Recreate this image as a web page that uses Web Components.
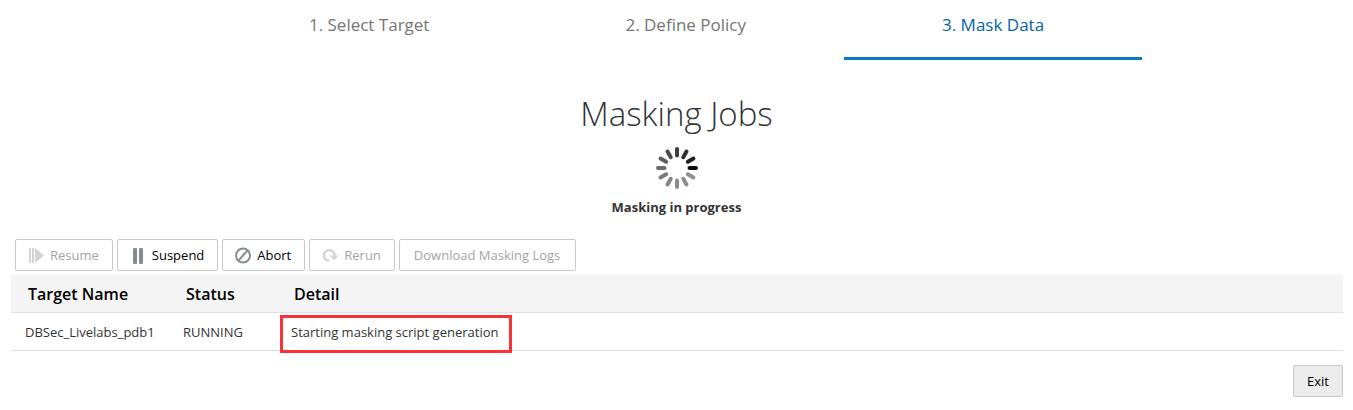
<!DOCTYPE html>
<html lang="en">
<head>
<meta charset="utf-8">
<title>Masking Jobs</title>
<style>
  body { margin: 0; background: #fff; color: #333; font: 13px/20px "Open Sans", "Noto Sans", sans-serif; }
</style>
</head>
<body>
<masking-page></masking-page>
<script>
const define = (name, html, setup) => {
  const tpl = document.createElement('template');
  tpl.innerHTML = html;
  customElements.define(name, class extends HTMLElement {
    constructor() {
      super();
      this.attachShadow({ mode: 'open' }).append(tpl.content.cloneNode(true));
    }
    connectedCallback() { if (setup) setup(this, this.shadowRoot); }
  });
};

const ICONS = {
  resume: '<path d="M1 1h2v15H1zM4 1h2v15H4zM7 1l9 7.500-9 7.500z"/>',
  suspend: '<rect x="3" y="1" width="4" height="16" rx="1"/><rect x="9" y="1" width="4" height="16" rx="1"/>',
  abort: '<g fill="none" stroke="currentColor" stroke-width="2"><circle cx="8" cy="8.500" r="7"/><path d="M3.500 13.500l9-10"/></g>',
  rerun: '<path d="M7 13.700A5.300 5.300 0 1 1 12.500 9" fill="none" stroke="currentColor" stroke-width="2.400"/><path d="M7.500 8.500h9L12 13.500z"/>'
};

define('step-tab', `
<style>
  :host { display: block; }
  a { display: block; box-sizing: border-box; height: 60px; padding: 13px 98px 0; border-bottom: 3px solid transparent;
      color: #757575; font-size: 17px; line-height: 24px; text-decoration: none; white-space: nowrap; }
  :host([selected]) a { color: #0464a4; border-color: #057cc5; }
</style>
<a href="#"><slot></slot></a>`, (host, root) => {
  if (host.hasAttribute('selected')) root.querySelector('a').setAttribute('aria-current', 'step');
});

define('tool-button', `
<style>
  :host { display: block; }
  button { display: flex; align-items: center; gap: 6px; box-sizing: border-box; height: 32px; padding: 0 13px;
      border: 1px solid #c6c9cb; border-radius: 2px; background: #fff; color: #000; font: inherit; white-space: nowrap; }
  :host([icon]) button { padding-left: 12px; }
  :host([wide]) button { padding: 0 15px 0 14px; }
  :host([filled]) button { background: #ececec; }
  button:disabled { color: #a3a3a3; }
  svg { width: 16px; height: 17px; overflow: visible; color: #878e92; fill: currentColor; }
  button:disabled svg { color: #d2d5d6; }
</style>
<button type="button"><slot></slot></button>`, (host, root) => {
  const button = root.querySelector('button');
  button.disabled = host.hasAttribute('disabled');
  const icon = ICONS[host.getAttribute('icon')];
  if (icon) button.insertAdjacentHTML('afterbegin', `<svg viewBox="0 0 16 17" aria-hidden="true">${icon}</svg>`);
});

define('progress-spinner', `
<style>
  :host { display: block; width: 42px; height: 42px; }
  svg { display: block; width: 100%; height: 100%; }
</style>
<svg viewBox="-21 -21 42 42" role="img" aria-label="Loading" stroke-width="4" stroke-linecap="round"></svg>`, (host, root) => {
  const shades = ['#3e3e3e', '#303030', '#202020', '#0b0b0b', '#909090', '#8e8e8e', '#8a8a8a', '#858585', '#7a7a7a', '#6b6b6b', '#5c5c5c', '#4c4c4c'];
  root.querySelector('svg').innerHTML = shades.map((c, i) =>
    `<path d="M0-19V-12.500" stroke="${c}" transform="rotate(${i * 30})"/>`).join('');
});

define('jobs-table', `
<style>
  :host { display: block; }
  table { width: 100%; border-collapse: separate; border-spacing: 0; text-align: left; }
  th { height: 36px; padding: 2px 17px 0; border-bottom: 1px solid #e0e0e0; background: #f4f4f4; color: #000;
      font-size: 16px; font-weight: 600; white-space: nowrap; }
  td { height: 37px; padding: 0 14px; border-bottom: 1px solid #e0e0e0; white-space: nowrap; }
  .target { width: 124px; }
  .status { width: 74px; }
  mark { position: relative; background: none; color: inherit; }
  mark::after { content: ""; position: absolute; inset: -8px -14px -12px -11px; border: 3px solid #fc3135; }
</style>
<table>
  <thead><tr><th class="target" scope="col">Target Name</th><th class="status" scope="col">Status</th><th scope="col">Detail</th></tr></thead>
  <tbody><tr><td>DBSec_Livelabs_pdb1</td><td>RUNNING</td><td><mark>Starting masking script generation</mark></td></tr></tbody>
</table>`);

define('masking-page', `
<style>
  :host { display: block; }
  nav { display: flex; justify-content: center; }
  header { display: flex; flex-direction: column; align-items: center; padding-top: 32px; }
  h1 { margin: 0; font-size: 33px; line-height: 44px; font-weight: 300; }
  progress-spinner { margin: 11px 0 8px; }
  p { margin: 0; font-weight: 700; }
  main { padding: 0 10px 0 11px; }
  .tools { display: flex; gap: 4px; padding: 22px 4px 3px; }
  footer { display: flex; justify-content: flex-end; padding-top: 14px; }
</style>
<nav aria-label="Steps">
  <step-tab>1. Select Target</step-tab>
  <step-tab>2. Define Policy</step-tab>
  <step-tab selected>3. Mask Data</step-tab>
</nav>
<header>
  <h1>Masking Jobs</h1>
  <progress-spinner></progress-spinner>
  <p role="status">Masking in progress</p>
</header>
<main>
  <div class="tools">
    <tool-button icon="resume" disabled>Resume</tool-button>
    <tool-button icon="suspend">Suspend</tool-button>
    <tool-button icon="abort">Abort</tool-button>
    <tool-button icon="rerun" disabled>Rerun</tool-button>
    <tool-button wide disabled>Download Masking Logs</tool-button>
  </div>
  <jobs-table></jobs-table>
  <footer><tool-button filled>Exit</tool-button></footer>
</main>`);
</script>
</body>
</html>
